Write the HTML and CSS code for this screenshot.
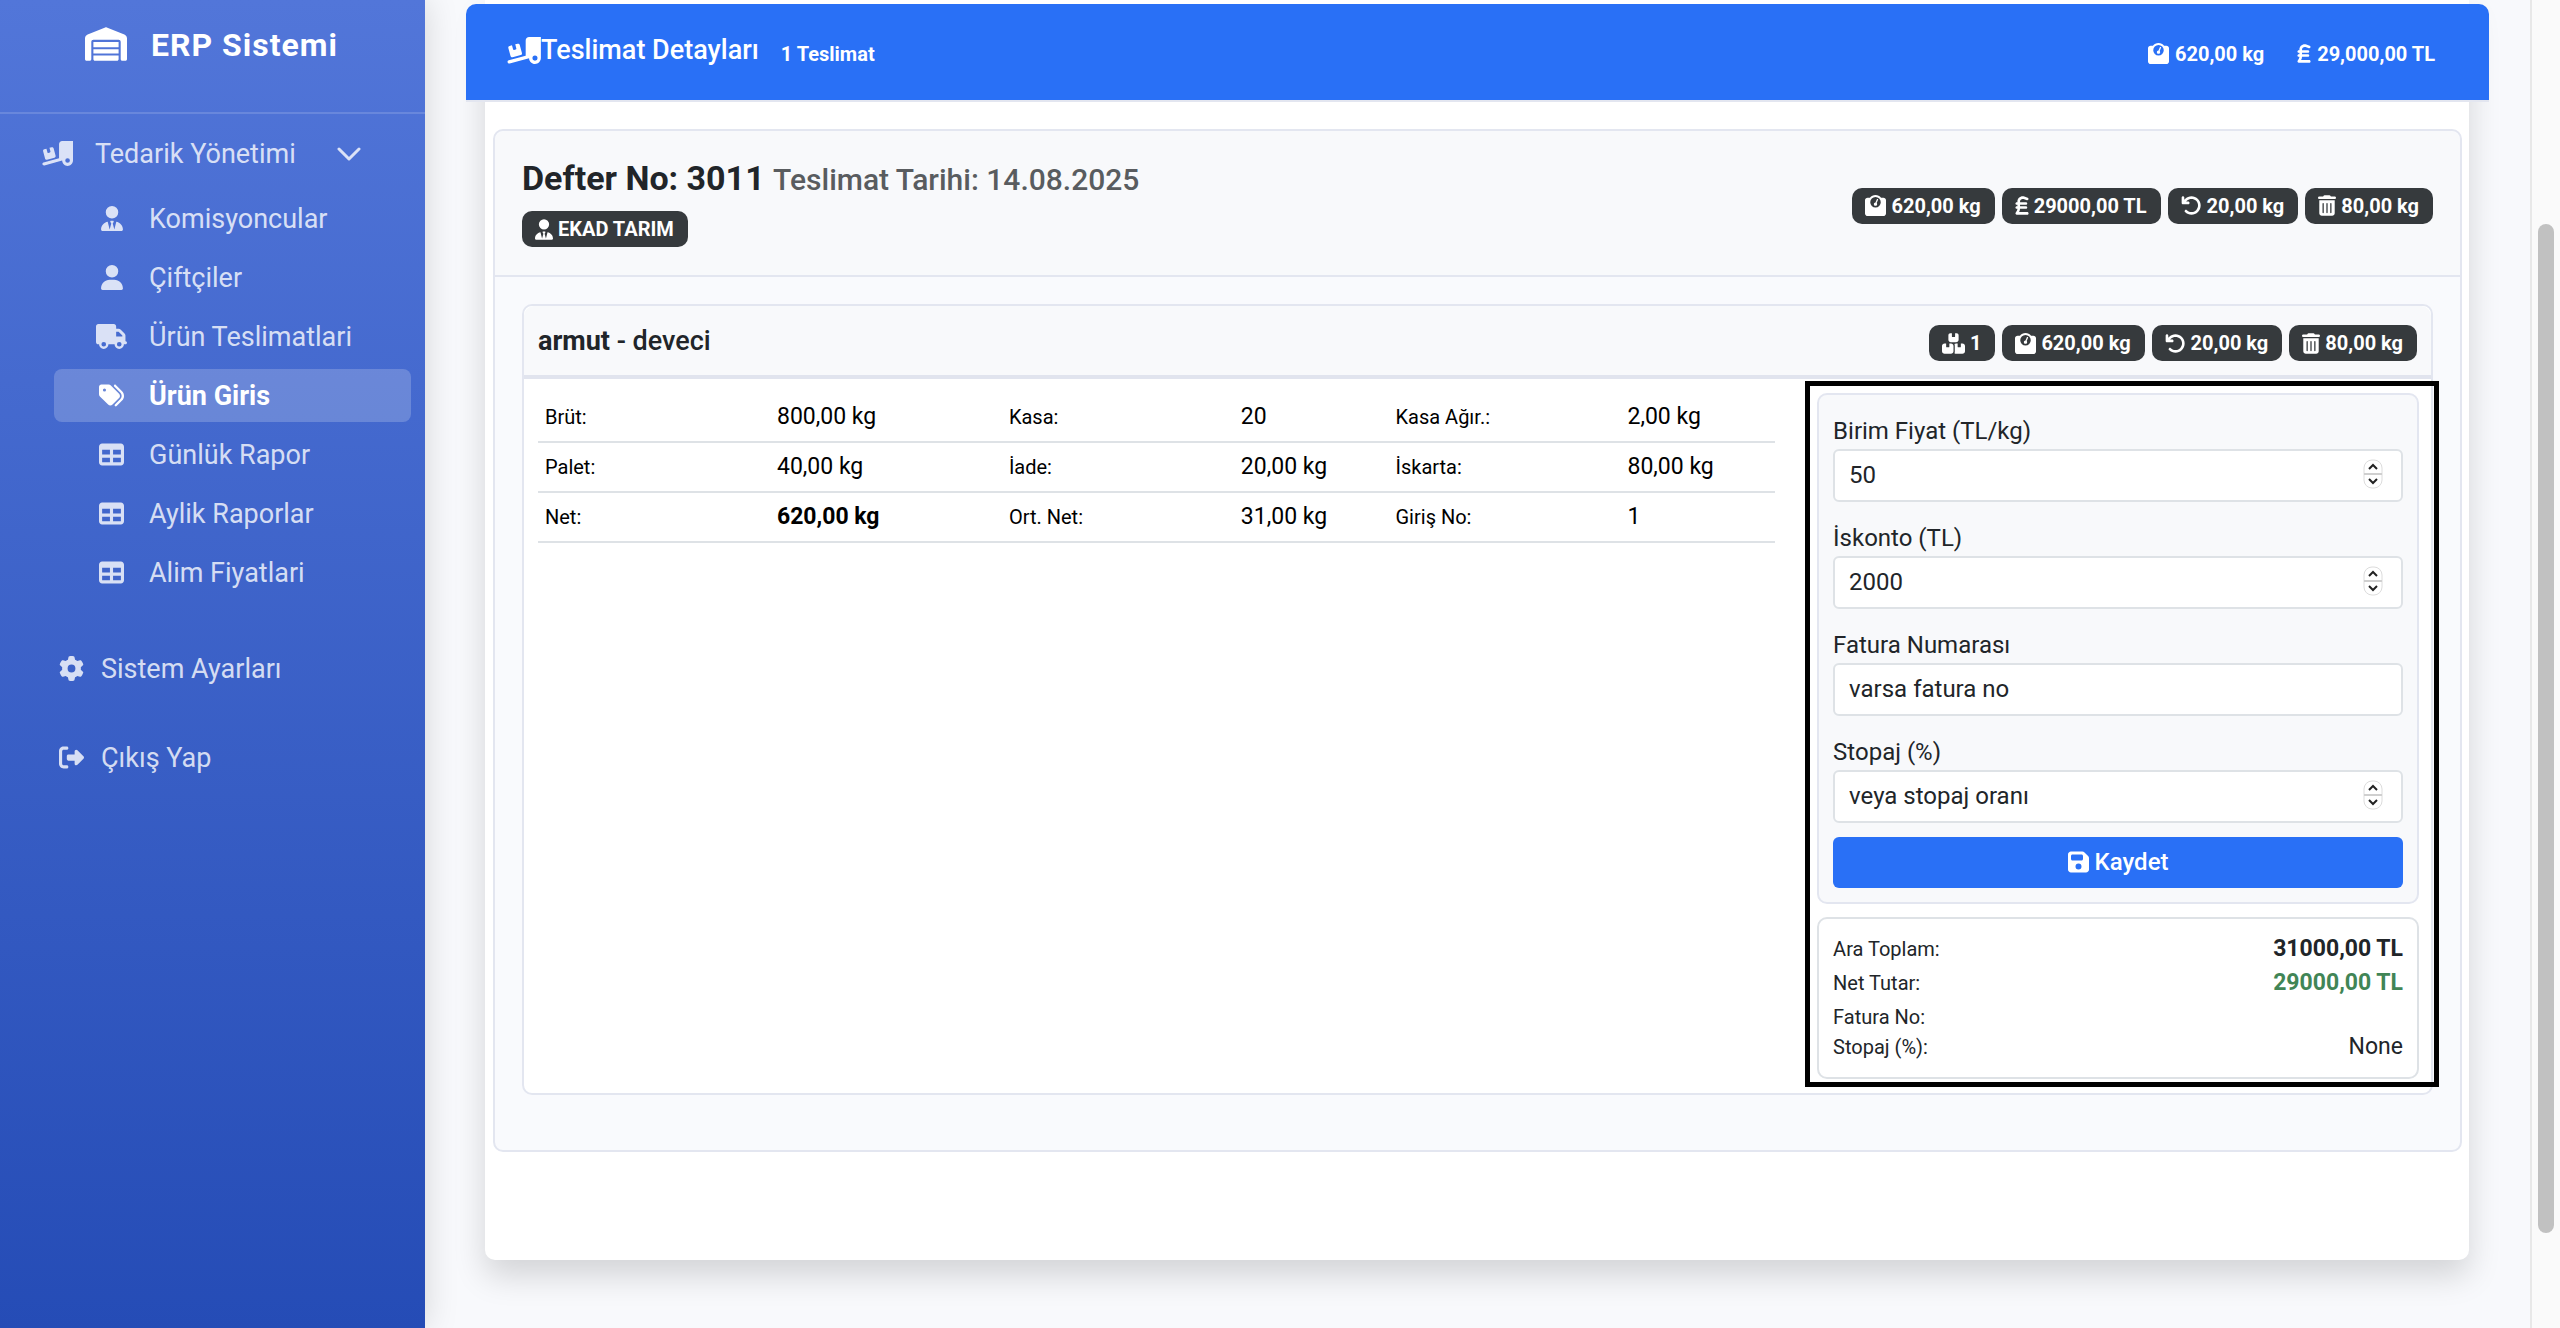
FILE: index.html
```html
<!DOCTYPE html>
<html lang="tr">
<head>
  <meta charset="UTF-8" />
  <meta name="viewport" content="width=device-width, initial-scale=1" />
  <title>ERP Sistemi - Ürün Giris</title>
  <link rel="stylesheet" href="styles.css">
</head>
<body>

<!-- Icon sprite -->
<svg class="sprite" xmlns="http://www.w3.org/2000/svg">
  <symbol id="i-warehouse" viewBox="0 0 640 512"><path d="M0 488V171.300c0-26.200 15.900-49.700 40.200-59.400L308.100 4.800c7.600-3.100 16.100-3.100 23.800 0L599.800 111.900c24.300 9.700 40.200 33.300 40.200 59.400V488c0 13.300-10.700 24-24 24H568c-13.300 0-24-10.700-24-24V224c0-17.700-14.300-32-32-32H128c-17.700 0-32 14.300-32 32V488c0 13.300-10.700 24-24 24H24c-13.300 0-24-10.700-24-24zm488 24l-336 0c-13.300 0-24-10.700-24-24V432H512l0 56c0 13.300-10.700 24-24 24zM128 400V336H512v64H128zm0-96V224H512v80H128z"/></symbol>
  <symbol id="i-ramp" viewBox="0 0 640 512"><path d="M640 0V400c0 61.900-50.100 112-112 112c-61 0-110.500-48.700-112-109.300L48.400 502.900c-17.100 4.600-34.600-5.400-39.300-22.500s5.400-34.600 22.500-39.300L352 353.800V64c0-35.300 28.700-64 64-64H640zM576 400a48 48 0 1 0 -96 0 48 48 0 1 0 96 0zM23.100 207.700c-4.600-17.100 5.600-34.600 22.600-39.200l46.400-12.400 20.700 77.300c2.300 8.500 11.100 13.600 19.600 11.300l30.900-8.300c8.500-2.300 13.600-11.100 11.300-19.600l-20.700-77.300 46.400-12.400c17.100-4.600 34.600 5.600 39.200 22.600l41.400 154.500c4.600 17.100-5.600 34.600-22.600 39.200L103.700 384.900c-17.100 4.600-34.600-5.600-39.200-22.600L23.100 207.700z"/></symbol>
  <symbol id="i-tie" viewBox="0 0 448 512"><path d="M224 256A128 128 0 1 0 224 0a128 128 0 1 0 0 256zM209.100 359.200l-18.600-31c-6.400-10.700 1.300-24.200 13.700-24.200H224h19.700c12.400 0 20.100 13.600 13.700 24.200l-18.600 31 33.400 123.900 39.500-161.200c77.200 12 136.300 78.800 136.300 159.400c0 17-13.800 30.700-30.700 30.700H265.100 182.900 30.700C13.800 512 0 498.200 0 481.300c0-80.600 59.100-147.400 136.300-159.400l39.500 161.200 33.400-123.900z"/></symbol>
  <symbol id="i-user" viewBox="0 0 448 512"><path d="M224 256A128 128 0 1 0 224 0a128 128 0 1 0 0 256zm-45.700 48C79.800 304 0 383.800 0 482.300C0 498.700 13.300 512 29.700 512H418.300c16.400 0 29.700-13.300 29.700-29.700C448 383.800 368.200 304 269.700 304H178.300z"/></symbol>
  <symbol id="i-truck" viewBox="0 0 640 512"><path d="M48 0C21.500 0 0 21.500 0 48V368c0 26.500 21.500 48 48 48H64c0 53 43 96 96 96s96-43 96-96H384c0 53 43 96 96 96s96-43 96-96h32c17.700 0 32-14.300 32-32s-14.300-32-32-32V288 256 237.300c0-17-6.700-33.300-18.700-45.300L512 114.700c-12-12-28.300-18.700-45.300-18.700H416V48c0-26.500-21.500-48-48-48H48zM416 160h50.700L544 237.300V256H416V160zM112 416a48 48 0 1 1 96 0 48 48 0 1 1 -96 0zm368-48a48 48 0 1 1 0 96 48 48 0 1 1 0-96z"/></symbol>
  <symbol id="i-tags" viewBox="0 0 512 512"><path d="M345 39.100L472.800 168.400c52.400 53 52.400 138.200 0 191.200L360.800 472.900c-9.300 9.400-24.500 9.500-33.900 .2s-9.500-24.500-.2-33.900L438.600 325.900c33.900-34.300 33.900-89.400 0-123.700L310.900 72.900c-9.300-9.400-9.200-24.600 .2-33.900s24.600-9.200 33.900 .2zM0 229.500V80C0 53.500 21.500 32 48 32H197.500c17 0 33.300 6.700 45.300 18.700l168 168c25 25 25 65.500 0 90.500L277.300 442.700c-25 25-65.500 25-90.500 0l-168-168C6.700 262.700 0 246.500 0 229.500zM144 144a32 32 0 1 0 -64 0 32 32 0 1 0 64 0z"/></symbol>
  <symbol id="i-table" viewBox="0 0 512 512"><path d="M64 256V160H224v96H64zm0 64H224v96H64V320zm224 96V320H448v96H288zM448 256H288V160H448v96zM64 32C28.700 32 0 60.700 0 96V416c0 35.300 28.700 64 64 64H448c35.300 0 64-28.700 64-64V96c0-35.300-28.700-64-64-64H64z"/></symbol>
  <symbol id="i-gear" viewBox="0 0 512 512"><path d="M495.900 166.600c3.200 8.700 .5 18.400-6.400 24.600l-43.300 39.400c1.100 8.300 1.700 16.800 1.700 25.400s-.6 17.100-1.700 25.400l43.300 39.400c6.900 6.200 9.600 15.900 6.400 24.600c-4.400 11.900-9.700 23.300-15.800 34.300l-4.700 8.100c-6.600 11-14 21.400-22.100 31.200c-5.900 7.200-15.700 9.600-24.500 6.800l-55.700-17.700c-13.400 10.300-28.200 18.900-44 25.400l-12.500 57.100c-2 9.100-9 16.300-18.200 17.800c-13.800 2.300-28 3.500-42.500 3.500s-28.700-1.200-42.500-3.500c-9.200-1.500-16.200-8.700-18.200-17.800l-12.500-57.100c-15.800-6.500-30.600-15.100-44-25.400L83.100 425.900c-8.800 2.800-18.600 .3-24.500-6.800c-8.100-9.800-15.500-20.200-22.100-31.200l-4.700-8.100c-6.100-11-11.400-22.400-15.800-34.300c-3.200-8.700-.5-18.400 6.400-24.600l43.300-39.400C64.600 273.100 64 264.600 64 256s.6-17.100 1.700-25.400L22.400 191.200c-6.900-6.200-9.600-15.900-6.400-24.600c4.400-11.900 9.700-23.300 15.800-34.300l4.700-8.100c6.600-11 14-21.400 22.100-31.200c5.900-7.200 15.700-9.600 24.500-6.800l55.700 17.700c13.400-10.300 28.200-18.900 44-25.400l12.500-57.100c2-9.100 9-16.300 18.200-17.800C227.300 1.200 241.500 0 256 0s28.700 1.200 42.500 3.500c9.200 1.500 16.200 8.700 18.200 17.800l12.500 57.100c15.800 6.500 30.600 15.100 44 25.400l55.700-17.700c8.800-2.800 18.600-.3 24.500 6.800c8.100 9.800 15.500 20.200 22.100 31.200l4.700 8.100c6.100 11 11.400 22.400 15.800 34.300zM256 336a80 80 0 1 0 0-160 80 80 0 1 0 0 160z"/></symbol>
  <symbol id="i-logout" viewBox="0 0 512 512"><path d="M377.900 105.900L500.700 228.700c7.200 7.200 11.300 17.100 11.300 27.300s-4.100 20.100-11.300 27.300L377.900 406.100c-6.400 6.400-15 9.900-24 9.900c-18.700 0-33.900-15.200-33.900-33.900l0-62.100-128 0c-17.700 0-32-14.300-32-32l0-64c0-17.700 14.300-32 32-32l128 0 0-62.100c0-18.700 15.200-33.900 33.900-33.900c9 0 17.600 3.600 24 9.900zM160 96L96 96c-17.700 0-32 14.300-32 32l0 256c0 17.700 14.300 32 32 32l64 0c17.700 0 32 14.300 32 32s-14.300 32-32 32l-64 0c-53 0-96-43-96-96L0 128C0 75 43 32 96 32l64 0c17.700 0 32 14.300 32 32s-14.300 32-32 32z"/></symbol>
  <symbol id="i-weight" viewBox="0 0 512 512"><path d="M128 176a128 128 0 1 1 256 0 128 128 0 1 1 -256 0zM391.800 64C359.500 24.900 310.700 0 256 0S152.500 24.900 120.200 64H64C28.700 64 0 92.700 0 128V448c0 35.300 28.700 64 64 64H448c35.300 0 64-28.700 64-64V128c0-35.300-28.700-64-64-64H391.800zM296 224c0-10.600-4.100-20.200-10.900-27.400l33.600-78.300c3.500-8.100-.3-17.500-8.400-21s-17.500 .3-21 8.400L255.700 184c-22 .1-39.700 18-39.700 40c0 22.100 17.900 40 40 40s40-17.900 40-40z"/></symbol>
  <symbol id="i-lira" viewBox="0 0 320 512"><path d="M112 160.400c0-35.500 28.800-64.400 64.400-64.400c6.900 0 13.800 1.100 20.400 3.300l81.200 27.100c16.800 5.600 34.900-3.500 40.500-20.200s-3.500-34.900-20.200-40.500L217 38.600c-13.100-4.400-26.800-6.600-40.600-6.600C105.500 32 48 89.500 48 160.400V176H32c-17.700 0-32 14.300-32 32s14.300 32 32 32H48v32H32c-17.700 0-32 14.300-32 32s14.300 32 32 32H48c0 16.400-4.700 34.500-13.700 49.400L4.600 431.500c-5.900 9.900-6.100 22.200-.4 32.200S20.500 480 32 480H288c17.700 0 32-14.300 32-32s-14.300-32-32-32H88.500l.7-1.100c14.400-24 22.300-50.900 22.800-78.900H256c17.700 0 32-14.300 32-32s-14.300-32-32-32H112V240H256c17.700 0 32-14.300 32-32s-14.300-32-32-32H112V160.400z"/></symbol>
  <symbol id="i-undo" viewBox="0 0 512 512"><path d="M125.700 160H176c17.700 0 32 14.300 32 32s-14.300 32-32 32H48c-17.700 0-32-14.300-32-32V64c0-17.700 14.300-32 32-32s32 14.300 32 32v51.200L97.600 97.600c87.500-87.500 229.300-87.500 316.800 0s87.500 229.300 0 316.800s-229.300 87.500-316.800 0c-12.500-12.500-12.500-32.800 0-45.300s32.800-12.500 45.300 0c62.500 62.500 163.800 62.500 226.300 0s62.500-163.800 0-226.300s-163.800-62.500-226.300 0L125.700 160z"/></symbol>
  <symbol id="i-trash" viewBox="0 0 448 512"><path d="M135.200 17.700C140.600 6.800 151.700 0 163.800 0H284.200c12.100 0 23.200 6.800 28.600 17.700L320 32h96c17.700 0 32 14.300 32 32s-14.300 32-32 32H32C14.300 96 0 81.700 0 64S14.300 32 32 32h96l7.200-14.300zM32 128H416V448c0 35.300-28.700 64-64 64H96c-35.300 0-64-28.700-64-64V128zm96 64c-8.800 0-16 7.200-16 16V432c0 8.800 7.200 16 16 16s16-7.200 16-16V208c0-8.800-7.200-16-16-16zm96 0c-8.800 0-16 7.200-16 16V432c0 8.800 7.200 16 16 16s16-7.200 16-16V208c0-8.800-7.200-16-16-16zm96 0c-8.800 0-16 7.200-16 16V432c0 8.800 7.200 16 16 16s16-7.200 16-16V208c0-8.800-7.200-16-16-16z"/></symbol>
  <symbol id="i-boxes" viewBox="0 0 576 512"><path d="M248 0H208c-26.500 0-48 21.500-48 48V160c0 35.300 28.700 64 64 64H352c35.300 0 64-28.700 64-64V48c0-26.500-21.500-48-48-48H328V80c0 8.800-7.200 16-16 16H264c-8.800 0-16-7.200-16-16V0zM64 256c-35.300 0-64 28.700-64 64V448c0 35.300 28.700 64 64 64H224c35.300 0 64-28.700 64-64V320c0-35.300-28.700-64-64-64H184v80c0 8.800-7.200 16-16 16H120c-8.800 0-16-7.200-16-16V256H64zM352 512H512c35.300 0 64-28.700 64-64V320c0-35.300-28.700-64-64-64H472v80c0 8.800-7.200 16-16 16H408c-8.800 0-16-7.200-16-16V256H352c-15 0-28.800 5.100-39.700 13.800c4.900 10.400 7.700 22 7.700 34.200V464c0 12.200-2.800 23.800-7.700 34.200C323.200 506.900 337 512 352 512z"/></symbol>
  <symbol id="i-save" viewBox="0 0 448 512"><path d="M64 32C28.700 32 0 60.700 0 96V416c0 35.300 28.700 64 64 64H384c35.300 0 64-28.700 64-64V173.300c0-17-6.700-33.300-18.700-45.300L352 50.700C340 38.700 323.700 32 306.700 32H64zm0 96c0-17.700 14.300-32 32-32H288c17.700 0 32 14.300 32 32v64c0 17.700-14.300 32-32 32H96c-17.700 0-32-14.300-32-32V128zM224 288a64 64 0 1 1 0 128 64 64 0 1 1 0-128z"/></symbol>
  <symbol id="i-spin" viewBox="0 0 20 30">
    <rect x="1" y="1" width="18" height="28" rx="8" fill="#fff" stroke="#dcdcdc" stroke-width="1"/>
    <path d="M1 15H19" stroke="#cfcfcf" stroke-width="2"/>
    <path d="M6 10L10 6L14 10M6 20L10 24L14 20" fill="none" stroke="#222" stroke-width="2"/>
  </symbol>
</svg>

<div class="page">
  <nav class="sidebar">
    <a class="brand" href="#"><svg class="brand-icon"><use href="#i-warehouse"/></svg>ERP Sistemi</a>

    <button class="nav-toggle" type="button">
      <svg class="icon w-640"><use href="#i-ramp"/></svg>
      <span>Tedarik Yönetimi</span>
      <svg class="chevron" viewBox="0 0 24 16"><path d="M2 3L12 13L22 3" fill="none" stroke="currentColor" stroke-width="3" stroke-linecap="round" stroke-linejoin="round"/></svg>
    </button>
    <ul class="submenu">
      <li><a href="#"><span class="slot"><svg class="icon w-448"><use href="#i-tie"/></svg></span>Komisyoncular</a></li>
      <li><a href="#"><span class="slot"><svg class="icon w-448"><use href="#i-user"/></svg></span>Çiftçiler</a></li>
      <li><a href="#"><span class="slot"><svg class="icon w-640"><use href="#i-truck"/></svg></span>Ürün Teslimatlari</a></li>
      <li><a class="active" href="#"><span class="slot"><svg class="icon"><use href="#i-tags"/></svg></span>Ürün Giris</a></li>
      <li><a href="#"><span class="slot"><svg class="icon"><use href="#i-table"/></svg></span>Günlük Rapor</a></li>
      <li><a href="#"><span class="slot"><svg class="icon"><use href="#i-table"/></svg></span>Aylik Raporlar</a></li>
      <li><a href="#"><span class="slot"><svg class="icon"><use href="#i-table"/></svg></span>Alim Fiyatlari</a></li>
    </ul>
    <div class="nav-bottom">
      <a href="#"><svg class="icon"><use href="#i-gear"/></svg>Sistem Ayarları</a>
      <a href="#"><svg class="icon"><use href="#i-logout"/></svg>Çıkış Yap</a>
    </div>
  </nav>

  <main class="content">
    <section class="card">
      <header class="card-header">
        <h1><svg class="title-icon"><use href="#i-ramp"/></svg>Teslimat Detayları</h1>
        <span class="count">1 Teslimat</span>
        <div class="totals">
          <span><svg class="badge-icon"><use href="#i-weight"/></svg>620,00 kg</span>
          <span><svg class="badge-icon w-320"><use href="#i-lira"/></svg>29,000,00 TL</span>
        </div>
      </header>

      <article class="delivery">
        <header class="delivery-header">
          <div>
            <h2>Defter No: 3011 <small>Teslimat Tarihi: 14.08.2025</small></h2>
            <span class="badge"><svg class="badge-icon w-448"><use href="#i-tie"/></svg>EKAD TARIM</span>
          </div>
          <div class="badges">
            <span class="badge"><svg class="badge-icon"><use href="#i-weight"/></svg>620,00 kg</span>
            <span class="badge"><svg class="badge-icon w-320"><use href="#i-lira"/></svg>29000,00 TL</span>
            <span class="badge"><svg class="badge-icon"><use href="#i-undo"/></svg>20,00 kg</span>
            <span class="badge"><svg class="badge-icon w-448"><use href="#i-trash"/></svg>80,00 kg</span>
          </div>
        </header>

        <div class="delivery-body">
          <section class="product">
            <header class="product-header">
              <h3><strong>armut</strong> - deveci</h3>
              <div class="badges">
                <span class="badge"><svg class="badge-icon w-576"><use href="#i-boxes"/></svg>1</span>
                <span class="badge"><svg class="badge-icon"><use href="#i-weight"/></svg>620,00 kg</span>
                <span class="badge"><svg class="badge-icon"><use href="#i-undo"/></svg>20,00 kg</span>
                <span class="badge"><svg class="badge-icon w-448"><use href="#i-trash"/></svg>80,00 kg</span>
              </div>
            </header>

            <div class="product-body">
              <div>
                <table class="details">
                  <colgroup>
                    <col class="wide"><col class="wide"><col class="wide"><col><col class="wide"><col>
                  </colgroup>
                  <tbody>
                    <tr><th>Brüt:</th><td>800,00 kg</td><th>Kasa:</th><td>20</td><th>Kasa Ağır.:</th><td>2,00 kg</td></tr>
                    <tr><th>Palet:</th><td>40,00 kg</td><th>İade:</th><td>20,00 kg</td><th>İskarta:</th><td>80,00 kg</td></tr>
                    <tr><th>Net:</th><td><strong>620,00 kg</strong></td><th>Ort. Net:</th><td>31,00 kg</td><th>Giriş No:</th><td>1</td></tr>
                  </tbody>
                </table>
              </div>

              <div class="pricing">
                <form class="price-form">
                  <div class="field">
                    <label for="birimFiyat">Birim Fiyat (TL/kg)</label>
                    <div class="control">
                      <input type="number" id="birimFiyat" value="50" />
                      <svg class="spin"><use href="#i-spin"/></svg>
                    </div>
                  </div>
                  <div class="field">
                    <label for="iskonto">İskonto (TL)</label>
                    <div class="control">
                      <input type="number" id="iskonto" value="2000" />
                      <svg class="spin"><use href="#i-spin"/></svg>
                    </div>
                  </div>
                  <div class="field">
                    <label for="faturaNo">Fatura Numarası</label>
                    <div class="control">
                      <input type="text" id="faturaNo" placeholder="varsa fatura no" />
                    </div>
                  </div>
                  <div class="field">
                    <label for="stopaj">Stopaj (%)</label>
                    <div class="control">
                      <input type="number" id="stopaj" placeholder="veya stopaj oranı" />
                      <svg class="spin"><use href="#i-spin"/></svg>
                    </div>
                  </div>
                  <button class="save" type="button"><svg class="save-icon"><use href="#i-save"/></svg>Kaydet</button>
                </form>

                <dl class="summary">
                  <div><dt>Ara Toplam:</dt><dd><strong>31000,00 TL</strong></dd></div>
                  <div><dt>Net Tutar:</dt><dd><strong class="net">29000,00 TL</strong></dd></div>
                  <div class="empty"><dt>Fatura No:</dt><dd></dd></div>
                  <div><dt>Stopaj (%):</dt><dd>None</dd></div>
                </dl>
              </div>
            </div>
          </section>
        </div>
      </article>
    </section>
  </main>

  <!-- scroll indicator -->
  <div class="scroll-track"><div class="scroll-thumb"></div></div>
</div>

</body>
</html>
```
FILE: styles.css
```css
* {
  box-sizing: border-box;
}

body {
  margin: 0;
  font-family: Roboto, "Liberation Sans", sans-serif;
  font-size: 24px;
  line-height: 36px;
  color: #212529;
  background-color: #f8f9fc;
}

h1, h2, h3, ul, dl, dd {
  margin: 0;
  padding: 0;
}

svg {
  fill: currentColor;
  flex-shrink: 0;
}

.sprite {
  display: none;
}

.page {
  display: flex;
  height: 100vh;
  overflow: hidden;
}

/* Sidebar */
.sidebar {
  width: 425px;
  flex-shrink: 0;
  position: relative;
  z-index: 2;
  color: rgba(255, 255, 255, 0.8);
  background: linear-gradient(180deg, #5276d9 0%, #254cb6 100%);
  box-shadow: 0 0 32px rgba(0, 0, 0, 0.15);
  font-size: 27px;
}

.brand {
  display: flex;
  justify-content: center;
  gap: 24px;
  height: 114px;
  padding: 27px 2px 0 0;
  border-bottom: 2px solid rgba(255, 255, 255, 0.15);
  color: #fff;
  font-size: 32px;
  font-weight: 700;
  letter-spacing: 1px;
  text-decoration: none;
}

.brand-icon {
  width: 42px;
  height: 34px;
}

.icon {
  width: 25px;
  height: 25px;
}

.w-640 { width: 31px; }
.w-448 { width: 22px; }

.nav-toggle {
  display: flex;
  align-items: center;
  width: 100%;
  height: 53px;
  margin-top: 13px;
  padding: 0 64px 0 42px;
  border: none;
  background: none;
  color: inherit;
  font: inherit;
  cursor: pointer;
}

.nav-toggle span {
  margin-left: 22px;
}

.chevron {
  width: 24px;
  height: 16px;
  margin-left: auto;
}

.submenu {
  list-style: none;
  display: flex;
  flex-direction: column;
  gap: 6px;
  margin: 12px 14px 0 54px;
}

.submenu a {
  display: flex;
  align-items: center;
  height: 53px;
  padding-left: 40px;
  border-radius: 8px;
  color: inherit;
  text-decoration: none;
}

.submenu a.active {
  color: #fff;
  font-weight: 700;
  background-color: rgba(255, 255, 255, 0.2);
}

.slot {
  display: flex;
  justify-content: center;
  width: 35px;
  margin-right: 20px;
}

.nav-bottom {
  display: flex;
  flex-direction: column;
  gap: 36px;
  margin-top: 43px;
  padding-left: 59px;
}

.nav-bottom a {
  display: flex;
  align-items: center;
  gap: 17px;
  height: 53px;
  color: inherit;
  text-decoration: none;
}

/* Main card */
.content {
  flex: 1;
  min-width: 0;
  padding: 0 61px 0 60px;
}

.card {
  padding: 4px 7px 108px 8px;
  background-color: #fff;
  border-radius: 0 0 10px 10px;
  box-shadow: 0 16px 32px rgba(0, 0, 0, 0.15);
}

.card-header {
  display: flex;
  align-items: center;
  height: 98px;
  margin: 0 -27px 27px;
  padding: 0 54px 0 41px;
  border-bottom: 2px solid #e3e6f0;
  border-radius: 10px 10px 0 0;
  background-color: #2970f6;
  background-clip: padding-box;
  color: #fff;
}

.card-header h1 {
  display: flex;
  align-items: center;
  padding-bottom: 4px;
  font-size: 27px;
  font-weight: 500;
}

.title-icon {
  width: 34px;
  height: 27px;
}

.count,
.totals {
  padding-top: 3px;
  font-size: 20px;
  font-weight: 700;
}

.count {
  margin-left: 22px;
}

.totals {
  display: flex;
  gap: 33px;
  margin-left: auto;
}

.totals span {
  display: flex;
  align-items: center;
  gap: 6px;
}

.badge-icon {
  width: 21px;
  height: 21px;
}

.badge-icon.w-320 { width: 14px; }
.badge-icon.w-448 { width: 18px; }
.badge-icon.w-576 { width: 23px; }

.badge {
  display: inline-flex;
  align-items: center;
  gap: 5px;
  height: 36px;
  padding: 0 14px 0 13px;
  border-radius: 10px;
  background-color: #363a3d;
  color: #fff;
  font-size: 20px;
  font-weight: 700;
  vertical-align: top;
}

.badges {
  display: flex;
  gap: 7px;
  padding-top: 5px;
}

.delivery {
  border: 2px solid #e3e6f0;
  border-radius: 10px;
  background-color: #f9fafd;
}

.delivery-header {
  display: flex;
  justify-content: space-between;
  align-items: center;
  padding: 28px 27px;
  border-bottom: 2px solid #e3e6f0;
  border-radius: 10px 10px 0 0;
  background-color: #f8f9fb;
}

.delivery-header h2 {
  margin-bottom: 12px;
  font-size: 34px;
  font-weight: 700;
  line-height: 38px;
}

.delivery-header small {
  font-size: 30px;
  font-weight: 500;
  color: #595c5f;
}

.delivery-body {
  padding: 27px 27px 55px;
}

.product {
  border: 2px solid #e3e6f0;
  border-radius: 10px;
  background-color: #fff;
}

.product-header {
  display: flex;
  justify-content: space-between;
  align-items: center;
  height: 73px;
  padding: 0 14px;
  border-bottom: 4px solid #e1e4ee;
  border-radius: 10px 10px 0 0;
  background-color: #f8f9fb;
}

.product-header h3 {
  font-size: 27px;
  font-weight: 500;
}

.product-body {
  display: grid;
  grid-template-columns: minmax(0, 1fr) 32%;
  gap: 42px;
  padding: 14px 12px 14px 14px;
}

.details {
  width: 100%;
  table-layout: fixed;
  border-collapse: collapse;
  color: #000;
  font-size: 23px;
}

.details .wide { width: 18.75%; }

.details th,
.details td {
  padding: 6px 7px;
  border-bottom: 2px solid #dee2e6;
  text-align: left;
  vertical-align: baseline;
}

.details th {
  font-size: 20px;
  font-weight: 400;
}

/* Pricing column with highlight frame */
.pricing {
  position: relative;
}

.pricing::after {
  content: "";
  position: absolute;
  inset: -12px -20px -8px -12px;
  border: 5px solid #000;
  pointer-events: none;
}

.price-form {
  display: flex;
  flex-direction: column;
  gap: 14px;
  padding: 14px;
  border: 2px solid #e3e6f0;
  border-radius: 10px;
  background-color: #f8f9fb;
}

.field label {
  display: block;
  padding-top: 4px;
}

.control {
  position: relative;
}

.control input {
  display: block;
  width: 100%;
  height: 53px;
  padding: 0 14px 2px;
  border: 2px solid #dee2e6;
  border-radius: 6px;
  background-color: #fff;
  color: #212529;
  font: inherit;
  outline: none;
  appearance: textfield;
}

.control input::placeholder {
  color: #212529;
  opacity: 1;
}

.spin {
  position: absolute;
  top: 10px;
  right: 20px;
  width: 20px;
  height: 30px;
}

.save {
  display: flex;
  justify-content: center;
  align-items: center;
  gap: 6px;
  height: 51px;
  padding: 0 6px 2px;
  border: none;
  border-radius: 6px;
  background-color: #2970f6;
  color: #fff;
  font: inherit;
  font-weight: 500;
  cursor: pointer;
}

.save-icon {
  width: 21px;
  height: 24px;
}

.summary {
  margin-top: 13px;
  padding: 12px 14px 14px;
  border: 2px solid #dee2e6;
  border-radius: 10px;
  background-color: #fff;
}

.summary div {
  display: flex;
  justify-content: space-between;
  height: 34px;
}

.summary .empty {
  height: 30px;
}

.summary dt {
  font-size: 20px;
}

.summary dd {
  font-size: 23px;
}

.summary .net {
  color: #418556;
}

/* Scroll bar */
.scroll-track {
  width: 30px;
  flex-shrink: 0;
  height: 100%;
  border-left: 2px solid #e8e8e8;
  background-color: #fafafa;
}

.scroll-thumb {
  width: 16px;
  height: 76%;
  margin: 224px 0 0 6px;
  border-radius: 8px;
  background-color: #c1c1c1;
}
```
